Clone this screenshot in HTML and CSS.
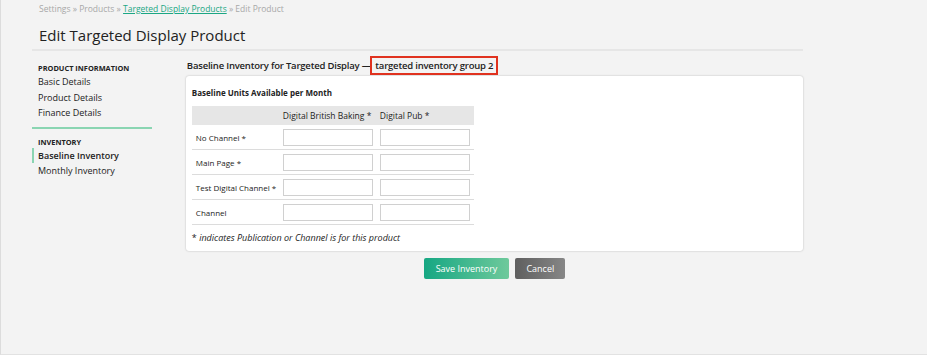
FILE: index.html
```html
<!DOCTYPE html>
<html lang="en">

<head>
    <meta charset="UTF-8">
    <title>Edit Targeted Display Product</title>
    <link rel="stylesheet" href="styles.css">
</head>

<body>
    <div class="page">
        <div class="header">
            <div class="breadcrumb">
                Settings &raquo; Products &raquo; <a href="#">Targeted Display Products</a> &raquo; Edit Product
            </div>
            <h1>Edit Targeted Display Product</h1>
        </div>

        <div class="layout">
            <!-- left navigation -->
            <div class="sidebar">
                <div class="nav-group">
                    <div class="nav-title">PRODUCT INFORMATION</div>
                    <a class="nav-item" href="#">Basic Details</a>
                    <a class="nav-item" href="#">Product Details</a>
                    <a class="nav-item" href="#">Finance Details</a>
                </div>
                <div class="nav-group second">
                    <div class="nav-title">INVENTORY</div>
                    <a class="nav-item active" href="#">Baseline Inventory</a>
                    <a class="nav-item" href="#">Monthly Inventory</a>
                </div>
            </div>

            <div class="content">
                <h2>Baseline Inventory for Targeted Display &mdash; <span class="highlight">targeted inventory group 2</span></h2>

                <div class="panel">
                    <h3>Baseline Units Available per Month</h3>
                    <table class="inventory">
                        <thead>
                            <tr>
                                <th class="label-col"></th>
                                <th>Digital British Baking *</th>
                                <th>Digital Pub *</th>
                            </tr>
                        </thead>
                        <tbody>
                            <tr>
                                <td class="label-col">No Channel *</td>
                                <td><input type="text"></td>
                                <td><input type="text"></td>
                            </tr>
                            <tr>
                                <td class="label-col">Main Page *</td>
                                <td><input type="text"></td>
                                <td><input type="text"></td>
                            </tr>
                            <tr>
                                <td class="label-col">Test Digital Channel *</td>
                                <td><input type="text"></td>
                                <td><input type="text"></td>
                            </tr>
                            <tr>
                                <td class="label-col">Channel</td>
                                <td><input type="text"></td>
                                <td><input type="text"></td>
                            </tr>
                        </tbody>
                    </table>
                    <p class="note">* <em>indicates Publication or Channel is for this product</em></p>
                </div>

                <div class="actions">
                    <button class="btn save">Save Inventory</button>
                    <button class="btn cancel">Cancel</button>
                </div>
            </div>
        </div>
    </div>
</body>

</html>
```

FILE: styles.css
```css
html,
body {
    height: 100%;
}

body {
    margin: 0;
    background-color: #f3f3f3;
    font-family: "Open Sans", Arial, sans-serif;
    color: #222;
    border-left: 1px solid #dcdcdc;
    border-bottom: 1px solid #e2e2e2;
    box-sizing: border-box;
}

.page {
    width: 771px;
    padding-left: 31px;
}

.header {
    padding: 2px 0 0 7px;
    border-bottom: 2px solid #e6e6e6;
    height: 51px;
    box-sizing: border-box;
}

.breadcrumb {
    font-size: 8.5px;
    color: #a8a8a8;
    line-height: 14px;
}

.breadcrumb a {
    color: #1ba784;
}

h1 {
    margin: 9px 0 0;
    font-size: 15px;
    font-weight: normal;
    line-height: 20px;
}

.layout {
    display: flex;
    gap: 34px;
}

/* sidebar */
.sidebar {
    width: 120px;
    padding-top: 11px;
}

.nav-group {
    padding: 0 0 6px 6px;
}

.nav-group.second {
    border-top: 2px solid #8ad5b2;
    padding-top: 7px;
}

.nav-title {
    font-size: 7.4px;
    font-weight: bold;
    line-height: 12px;
}

.nav-item {
    display: block;
    font-size: 9px;
    line-height: 15.5px;
    color: #222;
    text-decoration: none;
}

.nav-item.active {
    font-weight: 600;
    border-left: 2px solid #8ad5b2;
    margin-left: -6px;
    padding-left: 4px;
}

/* main column */
.content {
    width: 618px;
    padding-top: 5px;
}

h2 {
    margin: 0 0 1px;
    font-size: 9.5px;
    letter-spacing: -0.2px;
    line-height: 19px;
    font-weight: 600;
    padding-left: 1px;
}

.highlight {
    border: 2px solid #e0321f;
    padding: 1px 3px;
    margin-left: -3px;
}

.panel {
    background: #fff;
    border-radius: 3px;
    box-shadow: 0 0 2px rgba(0, 0, 0, 0.25);
    padding: 11px 6px 0;
    height: 175px;
    box-sizing: border-box;
}

h3 {
    margin: 0 0 7px;
    font-size: 8px;
    line-height: 12px;
    font-weight: bold;
}

.inventory {
    border-collapse: collapse;
    font-size: 8px;
}

.inventory th {
    background: #e6e6e6;
    font-weight: normal;
    font-size: 8.5px;
    height: 19px;
    padding: 0 4px 0 3px;
    text-align: left;
}

.inventory th.label-col {
    width: 84px;
    padding: 0 0 0 4px;
}

.inventory td {
    border-bottom: 1px solid #dcdcdc;
    height: 24px;
    padding: 0 4px 0 3px;
}

.inventory td.label-col {
    padding: 0 0 0 4px;
}

.inventory input {
    width: 90px;
    height: 17px;
    border: 1px solid #d0d0d0;
    box-sizing: border-box;
    margin: 0;
    display: block;
}

.note {
    margin: 7px 0 0;
    font-size: 9px;
    line-height: 12px;
}

/* buttons */
.actions {
    display: flex;
    justify-content: center;
    gap: 6px;
    margin-top: 7px;
}

.btn {
    border: none;
    border-radius: 2px;
    color: #fff;
    font-family: "Open Sans", Arial, sans-serif;
    font-size: 9px;
    height: 21px;
    padding: 0 12px;
    cursor: pointer;
}

.btn.save {
    background: linear-gradient(to right, #16a783, #6ec99b);
}

.btn.cancel {
    background: linear-gradient(to right, #5f5f5f, #868686);
    padding: 0 11px;
}
```
